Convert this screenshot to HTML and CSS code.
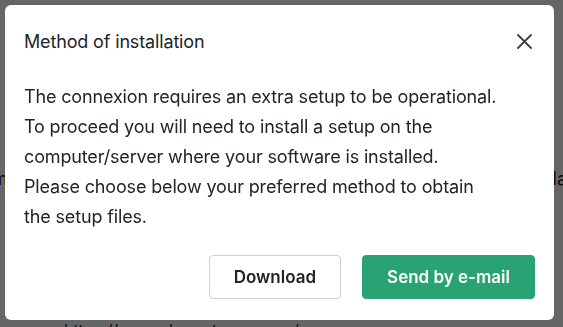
FILE: index.html
```html
<!DOCTYPE html>
<html lang="en">
<head>
    <meta charset="UTF-8">
    <meta name="viewport" content="width=device-width, initial-scale=1.0">
    <title>Method of installation</title>
    <link rel="stylesheet" href="styles.css">
</head>
<body>
    <div class="page">
        <div class="page-line">
            <span class="page-start">m</span>
            <span class="page-end">la</span>
        </div>
        <a class="page-link" href="#">https://www.sharpstream.com/ &#8599;</a>
    </div>

    <div class="overlay">
        <div class="modal">
            <div class="modal-header">
                <h2 class="modal-title">Method of installation</h2>
                <button class="close-button" aria-label="Close">
                    <svg width="15" height="15" viewBox="0 0 15 15">
                        <path d="M1 1 L14 14 M14 1 L1 14" stroke="#3c3f44" stroke-width="1.8" stroke-linecap="round"/>
                    </svg>
                </button>
            </div>
            <div class="modal-body">
                The connexion requires an extra setup to be operational.<br>
                To proceed you will need to install a setup on the<br>
                computer/server where your software is installed.<br>
                Please choose below your preferred method to obtain<br>
                the setup files.
            </div>
            <div class="modal-footer">
                <button class="button button-outline">Download</button>
                <button class="button button-primary">Send by e-mail</button>
            </div>
        </div>
    </div>
</body>
</html>
```

FILE: styles.css
```css
body {
    margin: 0;
    background-color: #fff;
    color: #212529;
    font-family: 'Inter', 'Noto Sans', sans-serif;
    height: 327px;
    overflow: hidden;
}

.page {
    padding-top: 164px;
    overflow: hidden;
}

.page-line {
    display: flex;
    justify-content: space-between;
    font-size: 18px;
    line-height: 30px;
}

.page-start {
    margin-left: -8px;
}

.page-end {
    margin-right: -4px;
}

.page-link {
    display: block;
    margin: 126px 0 0 64px;
    font-size: 16px;
    color: #212529;
    text-decoration: none;
}

.overlay {
    position: fixed;
    top: 0;
    left: 0;
    right: 0;
    bottom: 0;
    background-color: rgba(0, 0, 0, 0.6);
    padding: 5px 0 0 5px;
}

.modal {
    background-color: #fff;
    border-radius: 6px;
    width: 549px;
    height: 315px;
    box-sizing: border-box;
    display: flex;
    flex-direction: column;
}

.modal-header {
    display: flex;
    align-items: center;
    justify-content: space-between;
    padding: 23px 22px 0 19px;
}

.modal-title {
    margin: 0;
    font-size: 18px;
    font-weight: 400;
    line-height: 27px;
    letter-spacing: -0.15px;
}

.close-button {
    background: none;
    border: none;
    padding: 0;
    width: 15px;
    height: 15px;
    display: flex;
    cursor: pointer;
}

.modal-body {
    padding: 27px 19px 0 19px;
    font-size: 18px;
    line-height: 30px;
    letter-spacing: -0.15px;
}

.modal-footer {
    display: flex;
    justify-content: flex-end;
    gap: 21px;
    padding: 23px 19px 0 19px;
}

.button {
    height: 44px;
    padding: 0 24px;
    font-family: 'Inter', 'Noto Sans', sans-serif;
    font-size: 17px;
    font-weight: 600;
    border-radius: 4px;
    cursor: pointer;
}

.button-outline {
    background-color: #fff;
    color: #212529;
    border: 1px solid #ced0d6;
}

.button-primary {
    background-color: #29a373;
    color: #fff;
    border: 1px solid #29a373;
}
```
